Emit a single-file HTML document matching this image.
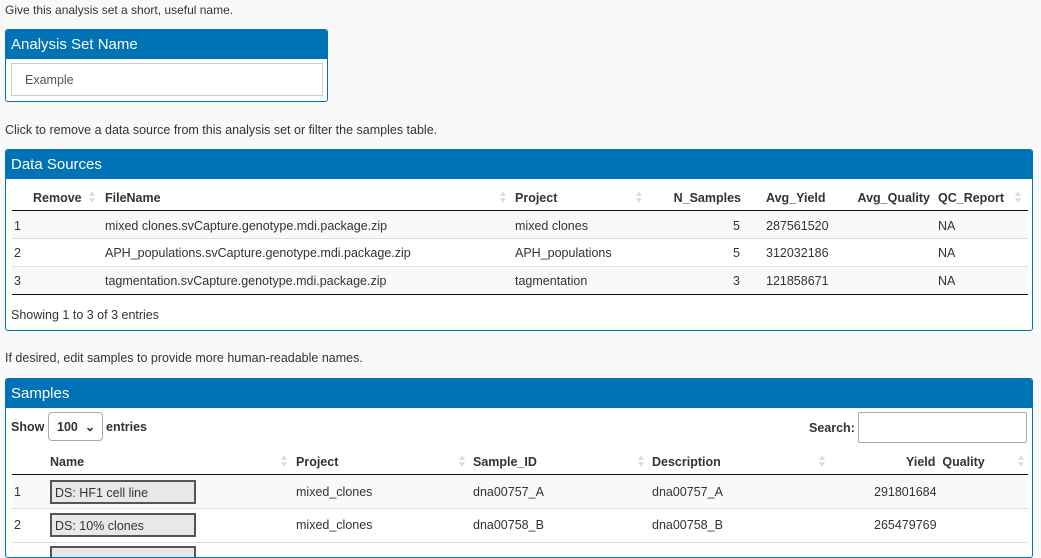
<!DOCTYPE html>
<html><head><meta charset="utf-8"><style>
*{box-sizing:border-box;margin:0;padding:0}
body{width:1041px;height:551px;overflow:hidden;background:#f9f9f9;font-family:"Liberation Sans",sans-serif;font-size:12.5px;color:#333;position:relative}
.a{position:absolute;white-space:nowrap}
.box{position:absolute;background:#fff;border:1px solid #0073b7;border-radius:3px;overflow:hidden}
.hd{position:absolute;left:0;right:0;top:0;height:29px;background:#0073b7;color:#fff;font-size:15px;padding:6px 0 0 5px}
.b{font-weight:bold;color:#333}
.line{position:absolute;height:1px;background:#111}
.row{position:absolute;height:28px}
.s{position:absolute;width:7px;height:14px}
.s:before,.s:after{content:"";position:absolute;left:0;border-left:3.5px solid transparent;border-right:3.5px solid transparent}
.s:before{top:1px;border-bottom:5px solid #ddd}
.s:after{bottom:1px;border-top:5px solid #ddd}
.nm{position:absolute;left:50px;width:146px;height:24px;background:#e6e9e7;border:2px solid #555;font-size:12.5px;padding:4px 3px;overflow:hidden}
.r{text-align:right}
</style></head><body>
<div class="a" style="left:5px;top:3px;font-size:12px">Give this analysis set a short, useful name.</div>
<div class="box" style="left:5px;top:29px;width:323px;height:73px">
 <div class="hd">Analysis Set Name</div>
 <div class="a" style="left:5px;top:33px;width:312px;height:33px;border:1px solid #ccc;padding:9px 13px;color:#555">Example</div>
</div>
<div class="a" style="left:5px;top:123px">Click to remove a data source from this analysis set or filter the samples table.</div>
<div class="box" style="left:5px;top:149px;width:1028px;height:182px">
 <div class="hd">Data Sources</div>
 <div class="a b" style="left:27px;top:41px">Remove</div><div class="s" style="left:83px;top:40px"></div>
 <div class="a b" style="left:99px;top:41px">FileName</div><div class="s" style="left:494px;top:40px"></div>
 <div class="a b" style="left:509px;top:41px">Project</div><div class="s" style="left:630px;top:40px"></div>
 <div class="a b r" style="left:635px;width:100px;top:41px">N_Samples</div>
 <div class="a b" style="left:760px;top:41px">Avg_Yield</div>
 <div class="a b r" style="left:820px;width:104px;top:41px">Avg_Quality</div>
 <div class="a b" style="left:932px;top:41px">QC_Report</div><div class="s" style="left:1009px;top:40px"></div>
 <div class="line" style="left:6px;width:1016px;top:60px"></div>
 <div class="row" style="left:6px;width:1016px;top:61px;background:#f9f9f9;border-bottom:1px solid #ddd"></div>
 <div class="row" style="left:6px;width:1016px;top:89px;background:#fff;border-bottom:1px solid #ddd"></div>
 <div class="row" style="left:6px;width:1016px;top:117px;background:#f9f9f9"></div>
 <div class="line" style="left:6px;width:1016px;top:144px"></div>
 <div class="a" style="left:8px;top:69px">1</div><div class="a" style="left:99px;top:69px">mixed  clones.svCapture.genotype.mdi.package.zip</div><div class="a" style="left:509px;top:69px">mixed  clones</div><div class="a" style="left:727px;top:69px">5</div><div class="a" style="left:760px;top:69px">287561520</div><div class="a" style="left:932px;top:69px">NA</div>
 <div class="a" style="left:8px;top:96px">2</div><div class="a" style="left:99px;top:96px">APH_populations.svCapture.genotype.mdi.package.zip</div><div class="a" style="left:509px;top:96px">APH_populations</div><div class="a" style="left:727px;top:96px">5</div><div class="a" style="left:760px;top:96px">312032186</div><div class="a" style="left:932px;top:96px">NA</div>
 <div class="a" style="left:8px;top:124px">3</div><div class="a" style="left:99px;top:124px">tagmentation.svCapture.genotype.mdi.package.zip</div><div class="a" style="left:509px;top:124px">tagmentation</div><div class="a" style="left:727px;top:124px">3</div><div class="a" style="left:760px;top:124px">121858671</div><div class="a" style="left:932px;top:124px">NA</div>
 <div class="a" style="left:5px;top:158px">Showing 1 to 3 of 3 entries</div>
</div>
<div class="a" style="left:5px;top:351px">If desired, edit samples to provide more human-readable names.</div>
<div class="box" style="left:5px;top:378px;width:1028px;height:180px">
 <div class="hd">Samples</div>
 <div class="a b" style="left:5px;top:41px">Show</div>
 <div class="a" style="left:42px;top:33px;width:55px;height:29px;border:1px solid #aaa;border-radius:4px;padding:6px 8px;font-weight:bold">100 &nbsp;&#8964;</div>
 <div class="a b" style="left:100px;top:41px">entries</div>
 <div class="a b" style="left:803px;top:42px">Search:</div>
 <div class="a" style="left:852px;top:33px;width:169px;height:31px;border:1px solid #aaa;border-radius:2px"></div>
 <div class="a b" style="left:44px;top:76px">Name</div><div class="s" style="left:275px;top:75px"></div>
 <div class="a b" style="left:290px;top:76px">Project</div><div class="s" style="left:453px;top:75px"></div>
 <div class="a b" style="left:467px;top:76px">Sample_ID</div><div class="s" style="left:632px;top:75px"></div>
 <div class="a b" style="left:646px;top:76px">Description</div><div class="s" style="left:813px;top:75px"></div>
 <div class="a b" style="left:900px;top:76px">Yield &nbsp;Quality</div><div class="s" style="left:1012px;top:75px"></div>
 <div class="line" style="left:6px;width:1016px;top:95px"></div>
 <div class="row" style="left:6px;width:1016px;top:96px;height:34px;background:#f9f9f9;border-bottom:1px solid #ddd"></div>
 <div class="row" style="left:6px;width:1016px;top:130px;height:34px;background:#fff;border-bottom:1px solid #ddd"></div>
 <div class="a" style="left:8px;top:106px">1</div><div class="nm" style="left:44px;top:101px">DS: HF1 cell line</div><div class="a" style="left:290px;top:106px">mixed_clones</div><div class="a" style="left:467px;top:106px">dna00757_A</div><div class="a" style="left:646px;top:106px">dna00757_A</div><div class="a" style="left:868px;top:106px">291801684</div>
 <div class="a" style="left:8px;top:139px">2</div><div class="nm" style="left:44px;top:134px">DS: 10% clones</div><div class="a" style="left:290px;top:139px">mixed_clones</div><div class="a" style="left:467px;top:139px">dna00758_B</div><div class="a" style="left:646px;top:139px">dna00758_B</div><div class="a" style="left:868px;top:139px">265479769</div>
 <div class="nm" style="left:44px;top:167px"></div>
</div>
</body></html>
